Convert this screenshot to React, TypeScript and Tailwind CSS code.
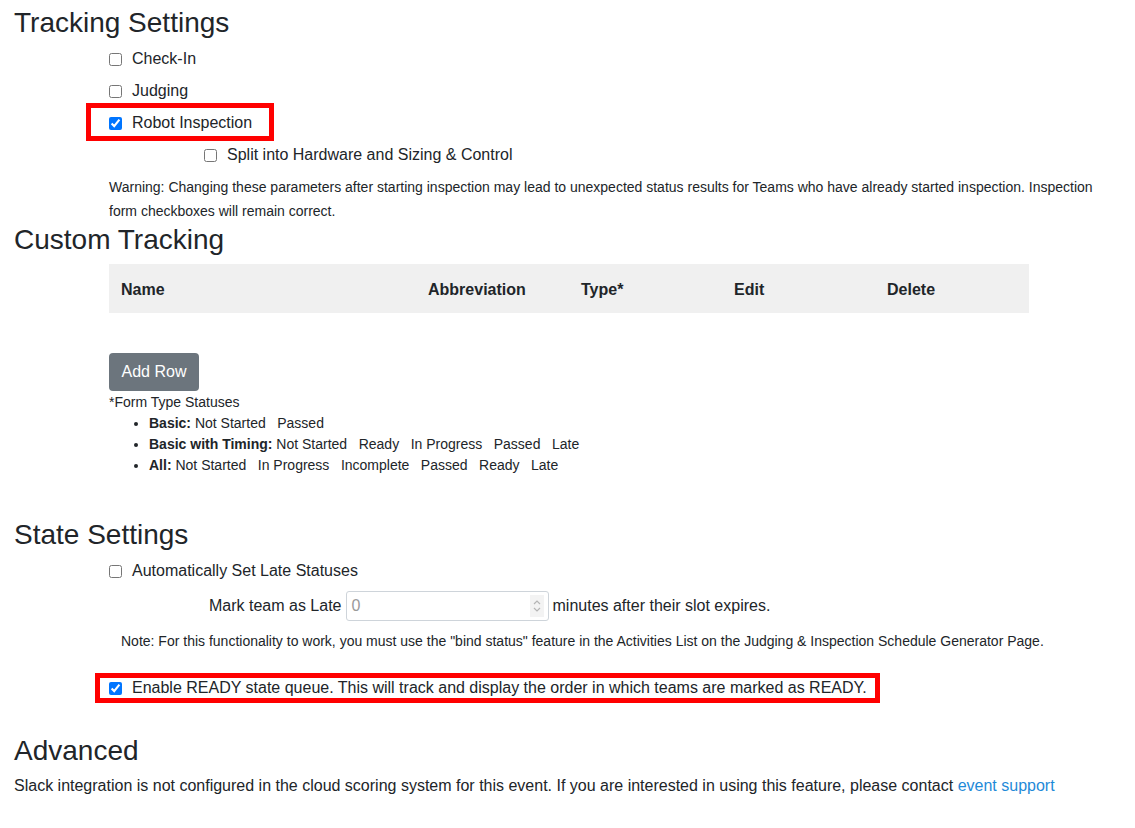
import React from "react";

function Check({ checked = false }: { checked?: boolean }) {
  return (
    <input
      type="checkbox"
      defaultChecked={checked}
      className="m-0 h-[13px] w-[13px] shrink-0"
    />
  );
}

function Statuses({ items }: { items: string[] }) {
  return (
    <>
      {items.map((s, i) => (
        <span key={i} className="mr-[11.5px]">
          {s}
        </span>
      ))}
    </>
  );
}

export default function App() {
  return (
    <div className="min-h-[828px] bg-white px-[14px] font-['Liberation_Sans',Arial,sans-serif] text-[#212529]">
      {/* Tracking Settings */}
      <h3 className="mt-[2px] h-[41px] text-[28px] leading-[41px] font-normal">
        Tracking Settings
      </h3>
      <div className="pl-[95px]">
        <div className="flex h-8 items-center gap-[10px] text-[16px]">
          <Check />
          <span>Check-In</span>
        </div>
        <div className="flex h-8 items-center gap-[10px] text-[16px]">
          <Check />
          <span>Judging</span>
        </div>
        <div className="relative flex h-8 items-center gap-[10px] text-[16px]">
          <div className="pointer-events-none absolute left-[-23px] top-[-4px] h-[38px] w-[188px] border-[5px] border-[#ff0000]" />
          <Check checked />
          <span>Robot Inspection</span>
        </div>
        <div className="flex h-8 items-center gap-[10px] pl-[95px] text-[16px]">
          <Check />
          <span>Split into Hardware and Sizing &amp; Control</span>
        </div>
        <p className="mt-[4px] text-[14px] leading-[24px]">
          Warning: Changing these parameters after starting inspection may lead to unexpected status results for Teams who have already started inspection. Inspection form checkboxes will remain correct.
        </p>
      </div>

      {/* Custom Tracking */}
      <h3 className="h-[34px] text-[28px] leading-[34px] font-normal">
        Custom Tracking
      </h3>
      <div className="pl-[95px]">
        <div className="mt-[7px] grid h-[49px] w-[920px] grid-cols-[307px_153px_153px_153px_1fr] items-center bg-[#f0f0f0] pt-[2px] text-[16px] font-bold">
          <div className="pl-[12px]">Name</div>
          <div className="pl-[12px]">Abbreviation</div>
          <div className="pl-[12px]">Type*</div>
          <div className="pl-[12px]">Edit</div>
          <div className="pl-[12px]">Delete</div>
        </div>
        <button className="mt-[40px] h-[38px] w-[90px] rounded-[4px] bg-[#6c757d] text-[16px] text-white">
          Add Row
        </button>
        <div className="mt-[1px] text-[14px] leading-[21px]">*Form Type Statuses</div>
        <ul className="list-disc pl-[40px] text-[14px] leading-[21px]">
          <li>
            <b>Basic:</b> <Statuses items={["Not Started", "Passed"]} />
          </li>
          <li>
            <b>Basic with Timing:</b>{" "}
            <Statuses items={["Not Started", "Ready", "In Progress", "Passed", "Late"]} />
          </li>
          <li>
            <b>All:</b>{" "}
            <Statuses items={["Not Started", "In Progress", "Incomplete", "Passed", "Ready", "Late"]} />
          </li>
        </ul>
      </div>

      {/* State Settings */}
      <h3 className="mt-[42px] h-[34px] text-[28px] leading-[34px] font-normal">
        State Settings
      </h3>
      <div className="pl-[95px]">
        <div className="mt-[3px] flex h-8 items-center gap-[10px] text-[16px]">
          <Check />
          <span>Automatically Set Late Statuses</span>
        </div>
      </div>
      <div className="mt-[4px] flex items-center pl-[195px] text-[16px]">
        <span>Mark team as Late</span>
        <div className="ml-[4px] flex h-[30px] w-[203px] items-center rounded-[3px] border border-[#ced4da] bg-white pl-[5px] pr-[4px]">
          <span className="flex-1 text-[#9a9a9a]">0</span>
          <div className="flex h-[22px] w-[14px] items-center justify-center bg-[#f3f3f3]">
            <svg width="8" height="14" viewBox="0 0 8 14" fill="none" stroke="#b5b5b5" strokeWidth="1.2">
              <path d="M1 5 L4 2 L7 5" />
              <path d="M1 9 L4 12 L7 9" />
            </svg>
          </div>
        </div>
        <span className="ml-[4px]">minutes after their slot expires.</span>
      </div>
      <p className="mt-[10px] pl-[107px] text-[14px] leading-[21px]">
        Note: For this functionality to work, you must use the "bind status" feature in the Activities List on the Judging &amp; Inspection Schedule Generator Page.
      </p>
      <div className="pl-[95px]">
        <div className="relative mt-[24px] flex h-[24px] items-center gap-[10px] text-[16px]">
          <div className="pointer-events-none absolute left-[-14px] top-[-3px] h-[30px] w-[785px] border-[5px] border-[#ff0000]" />
          <Check checked />
          <span>Enable READY state queue. This will track and display the order in which teams are marked as READY.</span>
        </div>
      </div>

      {/* Advanced */}
      <h3 className="mt-[34px] h-[34px] text-[28px] leading-[34px] font-normal">
        Advanced
      </h3>
      <p className="mt-[6px] text-[16px] leading-[24px]">
        Slack integration is not configured in the cloud scoring system for this event. If you are interested in using this feature, please contact{" "}
        <a href="#" className="text-[#1f8ad8]">
          event support
        </a>
      </p>
    </div>
  );
}
